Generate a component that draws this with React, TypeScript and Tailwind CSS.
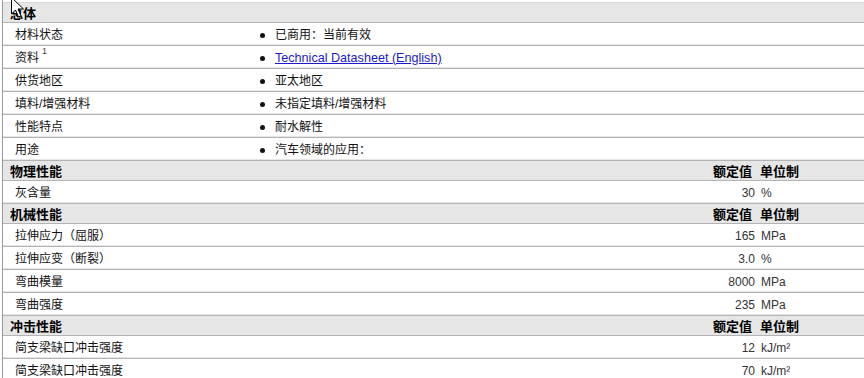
import React from "react";

const FONT = "font-['Liberation_Sans','Noto_Sans_CJK_SC',sans-serif]";

function Header({ title, cols }: { title: string; cols?: boolean }) {
  return (
    <div className="h-[20px] pt-[2px] bg-[#e6e6e6] border-b border-[#b4b4b4] flex items-center text-[13px] font-bold text-black leading-none">
      <div className="pl-[7px] flex-1">{title}</div>
      {cols && (
        <>
          <div className="text-right mr-[8px]">额定值</div>
          <div className="w-[104px]">单位制</div>
        </>
      )}
    </div>
  );
}

function BulletRow({ label, sup, children }: { label: string; sup?: string; children: React.ReactNode }) {
  return (
    <div className="h-[23px] pt-[2px] border-b border-[#b4b4b4] shadow-[inset_0_-1px_0_#e6e6e6] flex items-center text-[12px] text-[#111] leading-none">
      <div className="w-[255px] pl-[12px] flex items-start">
        <span>{label}</span>
        {sup && <span className="text-[9px] ml-[3px] -mt-[5px] text-[#444]">{sup}</span>}
      </div>
      <div className="w-[17px] flex items-center">
        <span className="ml-[2px] w-[5px] h-[5px] rounded-full bg-[#111]" />
      </div>
      <div>{children}</div>
    </div>
  );
}

function ValueRow({ label, value, unit }: { label: string; value: string; unit: React.ReactNode }) {
  return (
    <div className="h-[23px] pt-[2px] border-b border-[#b4b4b4] shadow-[inset_0_-1px_0_#e6e6e6] flex items-center text-[12px] text-[#111] leading-none">
      <div className="pl-[12px] flex-1">{label}</div>
      <div className="text-right mr-[5px] text-[#333]">{value}</div>
      <div className="w-[104px] pl-[1px] text-[#333]">{unit}</div>
    </div>
  );
}

export default function App() {
  return (
    <div className={`relative w-[864px] h-[378px] overflow-hidden bg-white ${FONT}`}>
      <div className="ml-[2px] pt-[3px] border-l border-[#9a9a9a] h-full">
        <div className="border-t border-[#d8d8d8] -mt-px">
          <Header title="总体" />
        </div>
        <BulletRow label="材料状态">已商用：当前有效</BulletRow>
        <BulletRow label="资料" sup="1">
          <span className="text-[12.6px] text-[#1a1acc] underline">Technical Datasheet (English)</span>
        </BulletRow>
        <BulletRow label="供货地区">亚太地区</BulletRow>
        <BulletRow label="填料/增强材料">未指定填料/增强材料</BulletRow>
        <BulletRow label="性能特点">耐水解性</BulletRow>
        <BulletRow label="用途">汽车领域的应用：</BulletRow>
        <Header title="物理性能" cols />
        <ValueRow label="灰含量" value="30" unit="%" />
        <Header title="机械性能" cols />
        <ValueRow label="拉伸应力（屈服）" value="165" unit="MPa" />
        <ValueRow label="拉伸应变（断裂）" value="3.0" unit="%" />
        <ValueRow label="弯曲模量" value="8000" unit="MPa" />
        <ValueRow label="弯曲强度" value="235" unit="MPa" />
        <Header title="冲击性能" cols />
        <ValueRow label="简支梁缺口冲击强度" value="12" unit="kJ/m²" />
        <ValueRow label="简支梁缺口冲击强度" value="70" unit="kJ/m²" />
      </div>
      <svg className="absolute left-[11px] top-[-3px]" width="16" height="24" viewBox="0 0 16 24">
        <path d="M0.5 0.5 L0.5 17 L4.5 13 L7.5 20 L10 19 L7 12 L12.5 12 Z" fill="white" stroke="black" strokeWidth="1" />
      </svg>
    </div>
  );
}
